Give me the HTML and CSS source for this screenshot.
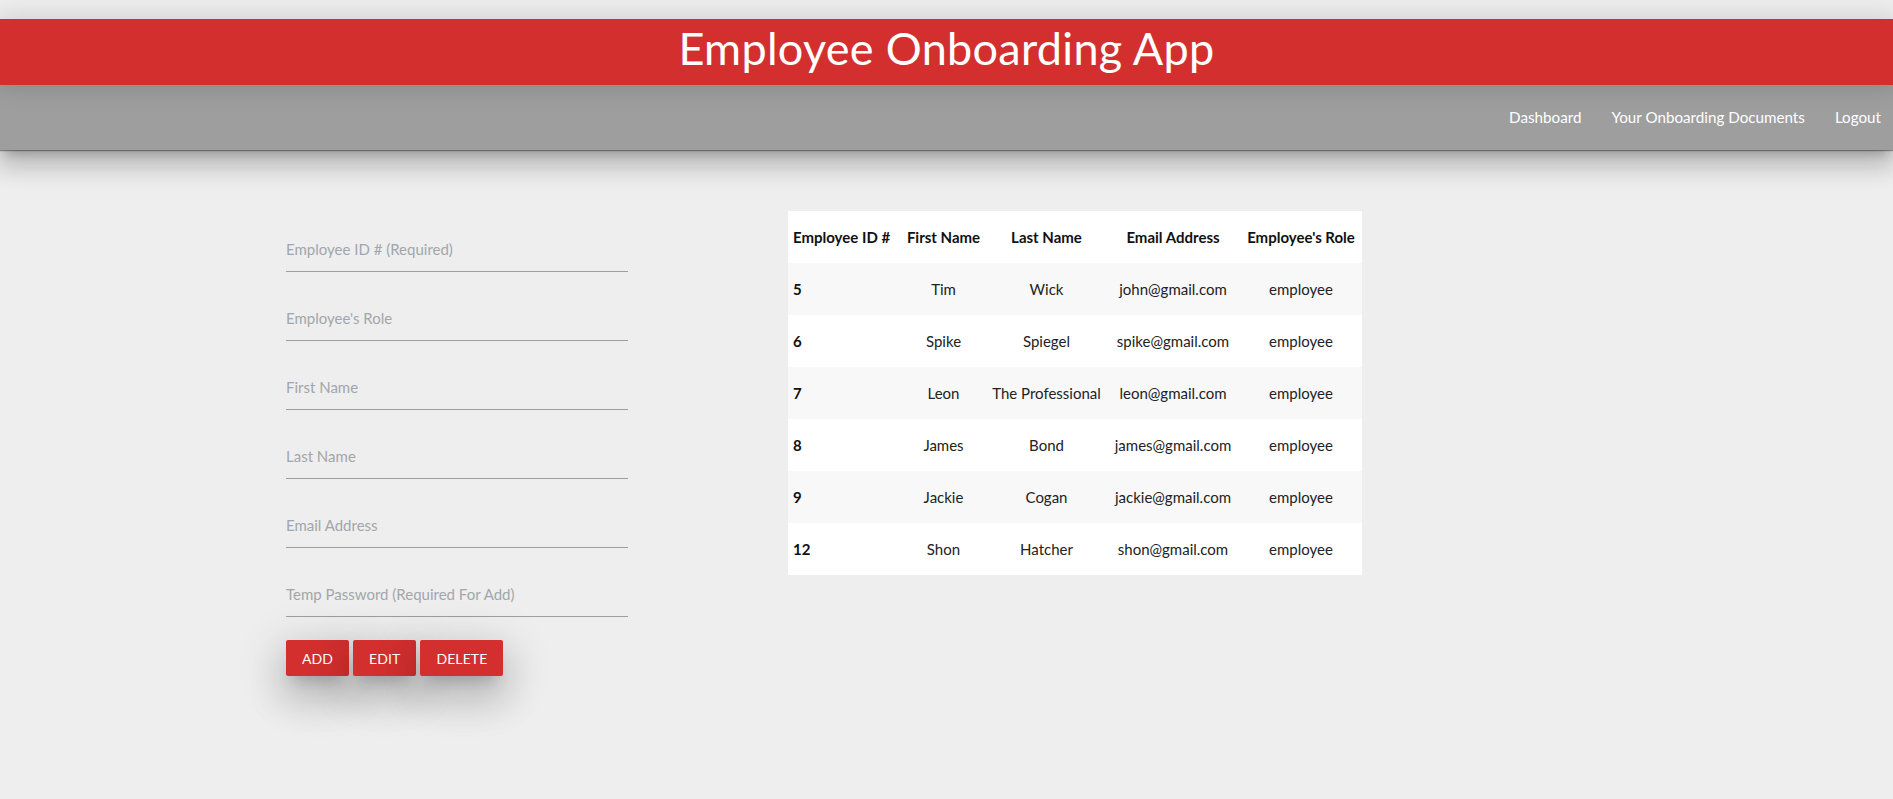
FILE: index.html
```html
<!DOCTYPE html>
<html lang="en">
<head>
<meta charset="utf-8">
<title>Employee Onboarding App</title>
<link rel="stylesheet" href="styles.css">
</head>
<body>
<header class="app-header">
  <h1 class="app-title">Employee Onboarding App</h1>
</header>
<nav class="app-nav">
  <ul class="nav-links">
    <li><a href="#">Dashboard</a></li>
    <li><a href="#">Your Onboarding Documents</a></li>
    <li><a href="#">Logout</a></li>
  </ul>
</nav>
<main class="content">
  <form class="employee-form">
    <div class="field"><input type="text" placeholder="Employee ID # (Required)"></div>
    <div class="field"><input type="text" placeholder="Employee's Role"></div>
    <div class="field"><input type="text" placeholder="First Name"></div>
    <div class="field"><input type="text" placeholder="Last Name"></div>
    <div class="field"><input type="text" placeholder="Email Address"></div>
    <div class="field"><input type="password" placeholder="Temp Password (Required For Add)"></div>
    <div class="actions">
      <button type="button" class="btn">Add</button>
      <button type="button" class="btn">Edit</button>
      <button type="button" class="btn">Delete</button>
    </div>
  </form>
  <table class="employee-table">
    <colgroup>
      <col class="c-id"><col class="c-first"><col class="c-last"><col class="c-email"><col class="c-role">
    </colgroup>
    <thead>
      <tr><th>Employee ID #</th><th>First Name</th><th>Last Name</th><th>Email Address</th><th>Employee's Role</th></tr>
    </thead>
    <tbody>
      <tr><th>5</th><td>Tim</td><td>Wick</td><td>john@gmail.com</td><td>employee</td></tr>
      <tr><th>6</th><td>Spike</td><td>Spiegel</td><td>spike@gmail.com</td><td>employee</td></tr>
      <tr><th>7</th><td>Leon</td><td>The Professional</td><td>leon@gmail.com</td><td>employee</td></tr>
      <tr><th>8</th><td>James</td><td>Bond</td><td>james@gmail.com</td><td>employee</td></tr>
      <tr><th>9</th><td>Jackie</td><td>Cogan</td><td>jackie@gmail.com</td><td>employee</td></tr>
      <tr><th>12</th><td>Shon</td><td>Hatcher</td><td>shon@gmail.com</td><td>employee</td></tr>
    </tbody>
  </table>
</main>
</body>
</html>
```

FILE: styles.css
```css
* { box-sizing: border-box; }

html, body {
  margin: 0;
  padding: 0;
}

body {
  background: #eeeeee;
  font-family: "Lato", "Noto Sans", sans-serif;
  font-size: 15px;
  line-height: 1.5;
  color: rgba(0, 0, 0, 0.87);
  min-height: 799px;
}

.app-header {
  margin-top: 19px;
  height: 66px;
  background: #d32f2f;
  text-align: center;
  position: relative;
  z-index: 2;
  box-shadow: 0 0 22px 4px rgba(0, 0, 0, 0.12);
}

.app-title {
  margin: 0;
  font-family: "Lato", "Noto Sans", sans-serif;
  font-weight: 400;
  font-size: 45px;
  line-height: 58px;
  color: #ffffff;
  letter-spacing: 0.3px;
}

.app-nav {
  height: 65px;
  background: #9e9e9e;
  position: relative;
  z-index: 1;
  box-shadow: 0 1px 1px 0 rgba(0, 0, 0, 0.35),
              0 16px 24px 2px rgba(0, 0, 0, 0.14),
              0 6px 30px 5px rgba(0, 0, 0, 0.12),
              0 8px 10px -5px rgba(0, 0, 0, 0.2);
}

.nav-links {
  list-style: none;
  margin: 0;
  padding: 0;
  height: 100%;
  display: flex;
  justify-content: flex-end;
  align-items: center;
}

.nav-links li:last-child a {
  padding-right: 12px;
}

.nav-links a {
  display: block;
  padding: 0 15px;
  color: #ffffff;
  text-decoration: none;
  font-size: 15.2px;
  line-height: 65px;
}

.content {
  display: flex;
  align-items: flex-start;
  gap: 160px;
  padding: 61px 0 0 286px;
}

.employee-form {
  width: 342px;
  margin-top: 15px;
}

.field {
  margin-bottom: 23px;
}

.field input {
  display: block;
  width: 100%;
  height: 46px;
  padding: 0;
  border: none;
  border-bottom: 1px solid #9e9e9e;
  background: transparent;
  font-family: inherit;
  font-size: 15px;
  color: rgba(0, 0, 0, 0.87);
  outline: none;
}

.field input::placeholder {
  color: #a2a6ab;
}

.actions {
  display: flex;
  gap: 4px;
}

.btn {
  height: 36px;
  padding: 0 16px;
  border: none;
  border-radius: 2px;
  background: #d32f2f;
  color: #ffffff;
  font-family: inherit;
  font-size: 14px;
  text-transform: uppercase;
  letter-spacing: 0.1px;
  cursor: pointer;
  box-shadow: 0 24px 38px 3px rgba(0, 0, 0, 0.14),
              0 9px 46px 8px rgba(0, 0, 0, 0.12),
              0 11px 15px -7px rgba(0, 0, 0, 0.2);
}

.employee-table {
  width: 574px;
  table-layout: fixed;
  border-collapse: collapse;
  background: #ffffff;
}

.c-id { width: 112px; }
.c-first { width: 87px; }
.c-last { width: 119px; }
.c-email { width: 134px; }
.c-role { width: 122px; }

.employee-table th,
.employee-table td {
  padding: 15px 5px;
  height: 52px;
  text-align: center;
  white-space: nowrap;
  font-size: 15px;
  line-height: 22px;
}

.employee-table th {
  font-weight: 700;
  color: #111111;
}

.employee-table td {
  font-weight: 400;
  color: #222222;
}

.employee-table tr > :first-child {
  text-align: left;
}

.employee-table tbody tr:nth-child(odd) {
  background: #f8f8f8;
}
```
